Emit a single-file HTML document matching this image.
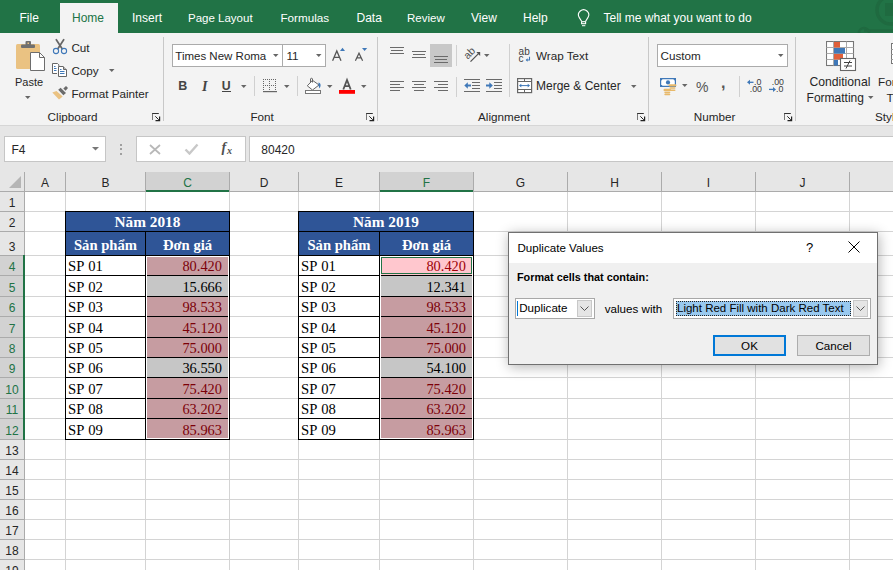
<!DOCTYPE html><html><head><meta charset="utf-8"><style>html,body{margin:0;padding:0}body{width:893px;height:570px;overflow:hidden;position:relative;background:#fff;font-family:"Liberation Sans",sans-serif}</style></head><body>
<div style="position:absolute;left:0px;top:0px;width:893px;height:33px;background:#217346;"></div>
<svg style="position:absolute;left:850px;top:0px;" width="43" height="33" viewBox="0 0 43 33"><circle cx="41" cy="10" r="14" fill="none" stroke="#1f6a40" stroke-width="3.5"/><rect x="35" y="3" width="8" height="13" fill="#1f6a40"/><path d="M14 30.5 H43" stroke="#1f6a40" stroke-width="2.5"/><path d="M9 33 A5 5 0 0 1 19 33" fill="none" stroke="#1f6a40" stroke-width="2.5"/></svg>
<div style="position:absolute;left:60px;top:3px;width:58px;height:30px;background:#f3f3f3;"></div>
<div style="position:absolute;left:19.5px;top:12.14px;font-family:'Liberation Sans', sans-serif;font-size:12px;line-height:1;color:#fff;font-weight:400;white-space:nowrap;">File</div>
<div style="position:absolute;left:72px;top:12.14px;font-family:'Liberation Sans', sans-serif;font-size:12px;line-height:1;color:#217346;font-weight:400;white-space:nowrap;">Home</div>
<div style="position:absolute;left:132px;top:12.14px;font-family:'Liberation Sans', sans-serif;font-size:12px;line-height:1;color:#fff;font-weight:400;white-space:nowrap;">Insert</div>
<div style="position:absolute;left:188px;top:12.57px;font-family:'Liberation Sans', sans-serif;font-size:11.5px;line-height:1;color:#fff;font-weight:400;white-space:nowrap;">Page Layout</div>
<div style="position:absolute;left:280.4px;top:12.40px;font-family:'Liberation Sans', sans-serif;font-size:11.7px;line-height:1;color:#fff;font-weight:400;white-space:nowrap;">Formulas</div>
<div style="position:absolute;left:356.5px;top:12.14px;font-family:'Liberation Sans', sans-serif;font-size:12px;line-height:1;color:#fff;font-weight:400;white-space:nowrap;">Data</div>
<div style="position:absolute;left:407px;top:12.57px;font-family:'Liberation Sans', sans-serif;font-size:11.5px;line-height:1;color:#fff;font-weight:400;white-space:nowrap;">Review</div>
<div style="position:absolute;left:471px;top:12.14px;font-family:'Liberation Sans', sans-serif;font-size:12px;line-height:1;color:#fff;font-weight:400;white-space:nowrap;">View</div>
<div style="position:absolute;left:523px;top:12.14px;font-family:'Liberation Sans', sans-serif;font-size:12px;line-height:1;color:#fff;font-weight:400;white-space:nowrap;">Help</div>
<svg style="position:absolute;left:572px;top:6px;" width="24" height="24" viewBox="0 0 24 24"><path d="M9.6 15.2 L7.3 11.6 A5.1 5.1 0 1 1 15.9 11.6 L13.6 15.2" fill="none" stroke="#fff" stroke-width="1.1"/><rect x="9.6" y="15.7" width="4" height="2" fill="none" stroke="#fff" stroke-width="1.1"/><rect x="10" y="19.2" width="3.3" height="1" fill="#fff"/></svg>
<div style="position:absolute;left:603.5px;top:12.14px;font-family:'Liberation Sans', sans-serif;font-size:12px;line-height:1;color:#fff;font-weight:400;white-space:nowrap;">Tell me what you want to do</div>
<div style="position:absolute;left:0px;top:33px;width:893px;height:92px;background:#f3f3f3;"></div>
<div style="position:absolute;left:0px;top:125px;width:893px;height:1px;background:#d6d6d6;"></div>
<div style="position:absolute;left:163px;top:37px;width:1px;height:84px;background:#c8c8c8;"></div>
<div style="position:absolute;left:377px;top:37px;width:1px;height:84px;background:#c8c8c8;"></div>
<div style="position:absolute;left:648px;top:37px;width:1px;height:84px;background:#c8c8c8;"></div>
<div style="position:absolute;left:795px;top:37px;width:1px;height:84px;background:#c8c8c8;"></div>
<div style="position:absolute;left:47.6px;top:111.40px;font-family:'Liberation Sans', sans-serif;font-size:11.7px;line-height:1;color:#262626;font-weight:400;white-space:nowrap;">Clipboard</div>
<div style="position:absolute;left:250.4px;top:111.40px;font-family:'Liberation Sans', sans-serif;font-size:11.7px;line-height:1;color:#262626;font-weight:400;white-space:nowrap;">Font</div>
<div style="position:absolute;left:478px;top:111.40px;font-family:'Liberation Sans', sans-serif;font-size:11.7px;line-height:1;color:#262626;font-weight:400;white-space:nowrap;">Alignment</div>
<div style="position:absolute;left:693.8px;top:111.40px;font-family:'Liberation Sans', sans-serif;font-size:11.7px;line-height:1;color:#262626;font-weight:400;white-space:nowrap;">Number</div>
<div style="position:absolute;left:875px;top:111.40px;font-family:'Liberation Sans', sans-serif;font-size:11.7px;line-height:1;color:#262626;font-weight:400;white-space:nowrap;">Styles</div>
<svg style="position:absolute;left:151px;top:112px;" width="11" height="11" viewBox="0 0 11 11"><path d="M1.5 1.2 V8" stroke="#777" stroke-width="1"/><path d="M1.2 1.5 H7.8" stroke="#333" stroke-width="1"/><path d="M4.3 4.3 L7.8 7.8" stroke="#222" stroke-width="1"/><path d="M4.5 8.6 H8.6 V4.5" fill="none" stroke="#222" stroke-width="1.2"/></svg>
<svg style="position:absolute;left:365px;top:112px;" width="11" height="11" viewBox="0 0 11 11"><path d="M1.5 1.2 V8" stroke="#777" stroke-width="1"/><path d="M1.2 1.5 H7.8" stroke="#333" stroke-width="1"/><path d="M4.3 4.3 L7.8 7.8" stroke="#222" stroke-width="1"/><path d="M4.5 8.6 H8.6 V4.5" fill="none" stroke="#222" stroke-width="1.2"/></svg>
<svg style="position:absolute;left:636px;top:112px;" width="11" height="11" viewBox="0 0 11 11"><path d="M1.5 1.2 V8" stroke="#777" stroke-width="1"/><path d="M1.2 1.5 H7.8" stroke="#333" stroke-width="1"/><path d="M4.3 4.3 L7.8 7.8" stroke="#222" stroke-width="1"/><path d="M4.5 8.6 H8.6 V4.5" fill="none" stroke="#222" stroke-width="1.2"/></svg>
<svg style="position:absolute;left:782.8px;top:112px;" width="11" height="11" viewBox="0 0 11 11"><path d="M1.5 1.2 V8" stroke="#777" stroke-width="1"/><path d="M1.2 1.5 H7.8" stroke="#333" stroke-width="1"/><path d="M4.3 4.3 L7.8 7.8" stroke="#222" stroke-width="1"/><path d="M4.5 8.6 H8.6 V4.5" fill="none" stroke="#222" stroke-width="1.2"/></svg>
<svg style="position:absolute;left:14px;top:40px;" width="32" height="32" viewBox="0 0 32 32"><rect x="2" y="4" width="24" height="25" rx="1.5" fill="#eac282"/><rect x="7" y="4.5" width="14" height="3.5" rx="1" fill="#707070"/><rect x="11.5" y="1" width="5.5" height="4.5" rx="1" fill="#707070"/><rect x="13.5" y="2.5" width="1.5" height="1.5" fill="#eac282"/><path d="M16.5 12.5 H25.5 L30.5 17.5 V30.5 H16.5 Z" fill="#fff" stroke="#6d6d6d" stroke-width="1"/><path d="M25.5 12.5 V17.5 H30.5" fill="none" stroke="#6d6d6d" stroke-width="1"/></svg>
<div style="position:absolute;left:14.5px;top:76.40px;font-family:'Liberation Sans', sans-serif;font-size:11.7px;line-height:1;color:#262626;font-weight:400;white-space:nowrap;transform:scaleX(0.94);transform-origin:0 0;">Paste</div>
<svg style="position:absolute;left:23.85px;top:95.3px" width="7.5" height="5" viewBox="0 0 7.5 5"><path d="M1 1 H6.5 L3.75 4 Z" fill="#666"/></svg>
<svg style="position:absolute;left:52px;top:38px;" width="17" height="17" viewBox="0 0 17 17"><path d="M4.3 1.7 L10 10.5 M11.7 1.7 L6 10.5" stroke="#666" stroke-width="1.7" stroke-linecap="round"/><circle cx="4" cy="13" r="2.6" fill="none" stroke="#3f78b8" stroke-width="1.1"/><circle cx="12" cy="13" r="2.6" fill="none" stroke="#3f78b8" stroke-width="1.1"/></svg>
<div style="position:absolute;left:71.4px;top:42.40px;font-family:'Liberation Sans', sans-serif;font-size:11.7px;line-height:1;color:#262626;font-weight:400;white-space:nowrap;">Cut</div>
<svg style="position:absolute;left:50px;top:60px;" width="18" height="18" viewBox="0 0 18 18"><path d="M7 13.5 H2.5 V3.5 H7.5 L8.8 4.8 V6.5" fill="#fff" stroke="#666" stroke-width="1"/><path d="M8.5 6.5 H13 L16.5 10 V16.5 H8.5 Z" fill="#fff" stroke="#666" stroke-width="1"/><path d="M13.5 6.5 V9.5 H16.5" fill="none" stroke="#666" stroke-width="1"/><path d="M4 6.5 H5.5 M4 8.5 H6.5 M4 10.5 H6.5 M10 9.5 H11.5 M10 11.5 H14.5 M10 13.5 H14.5" stroke="#3f78b8" stroke-width="1"/></svg>
<div style="position:absolute;left:71.4px;top:64.80px;font-family:'Liberation Sans', sans-serif;font-size:11.7px;line-height:1;color:#262626;font-weight:400;white-space:nowrap;">Copy</div>
<svg style="position:absolute;left:107.65px;top:68.3px" width="7.5" height="5" viewBox="0 0 7.5 5"><path d="M1 1 H6.5 L3.75 4 Z" fill="#666"/></svg>
<svg style="position:absolute;left:50px;top:83px;" width="20" height="20" viewBox="0 0 20 20"><path d="M2.3 9.4 L6.5 8 L12.7 13.5 L9 16.5 Z" fill="#eac282"/><path d="M8.2 6.8 L10.6 4.7 L16 10 L13.4 12.2 Z" fill="#6b6b6b"/><path d="M13.3 5.6 L16 3 L18 5 L15.6 7.8 Z" fill="#6b6b6b"/></svg>
<div style="position:absolute;left:71.4px;top:87.80px;font-family:'Liberation Sans', sans-serif;font-size:11.7px;line-height:1;color:#262626;font-weight:400;white-space:nowrap;">Format Painter</div>
<div style="position:absolute;left:172px;top:44px;width:109px;height:21px;background:#fff;border:1px solid #ababab"></div>
<div style="position:absolute;left:282px;top:44px;width:43px;height:21px;background:#fff;border:1px solid #ababab;border-left:none"></div>
<div style="position:absolute;left:282px;top:44px;width:1px;height:23px;background:#ababab;"></div>
<div style="position:absolute;left:175.3px;top:50.57px;font-family:'Liberation Sans', sans-serif;font-size:11.5px;line-height:1;color:#262626;font-weight:400;white-space:nowrap;">Times New Roma</div>
<svg style="position:absolute;left:271.75px;top:53px" width="7.5" height="5" viewBox="0 0 7.5 5"><path d="M1 1 H6.5 L3.75 4 Z" fill="#666"/></svg>
<div style="position:absolute;left:286.4px;top:50.40px;font-family:'Liberation Sans', sans-serif;font-size:11.7px;line-height:1;color:#262626;font-weight:400;white-space:nowrap;">11</div>
<svg style="position:absolute;left:314.75px;top:53px" width="7.5" height="5" viewBox="0 0 7.5 5"><path d="M1 1 H6.5 L3.75 4 Z" fill="#666"/></svg>
<svg style="position:absolute;left:331px;top:45px;" width="16" height="17" viewBox="0 0 16 17"><path d="M1.6 15.8 L5.8 6 L10 15.8 M3.3 12.3 H8.3" fill="none" stroke="#555" stroke-width="1.3"/><path d="M9 6 L11.5 2.8 L14 6 Z" fill="#3f78b8"/></svg>
<svg style="position:absolute;left:354px;top:45px;" width="16" height="17" viewBox="0 0 16 17"><path d="M1.4 15.8 L5 8.2 L8.6 15.8 M2.8 12.8 H7.2" fill="none" stroke="#555" stroke-width="1.2"/><path d="M8 3 H13.2 L10.6 6 Z" fill="#3f78b8"/></svg>
<div style="position:absolute;left:178.3px;top:79.72px;font-family:'Liberation Sans', sans-serif;font-size:12.5px;line-height:1;color:#444;font-weight:700;white-space:nowrap;">B</div>
<div style="position:absolute;left:202px;top:79.11px;font-family:'Liberation Serif', serif;font-size:14.2px;line-height:1;color:#444;font-weight:700;white-space:nowrap;"><i>I</i></div>
<div style="position:absolute;left:221.8px;top:79.69px;font-family:'Liberation Sans', sans-serif;font-size:12.3px;line-height:1;color:#444;font-weight:700;white-space:nowrap;">U</div>
<div style="position:absolute;left:222px;top:91px;width:9px;height:1px;background:#444;"></div>
<svg style="position:absolute;left:239.65px;top:84.2px" width="7.5" height="5" viewBox="0 0 7.5 5"><path d="M1 1 H6.5 L3.75 4 Z" fill="#666"/></svg>
<div style="position:absolute;left:254px;top:76px;width:1px;height:20px;background:#d0d0d0;"></div>
<svg style="position:absolute;left:263px;top:79px;" width="15" height="14" viewBox="0 0 15 14"><rect x="0" y="0" width="1" height="1" fill="#666"/><rect x="0" y="2" width="1" height="1" fill="#666"/><rect x="0" y="4" width="1" height="1" fill="#666"/><rect x="0" y="6" width="1" height="1" fill="#666"/><rect x="0" y="8" width="1" height="1" fill="#666"/><rect x="0" y="10" width="1" height="1" fill="#666"/><rect x="2" y="0" width="1" height="1" fill="#666"/><rect x="2" y="6" width="1" height="1" fill="#666"/><rect x="4" y="0" width="1" height="1" fill="#666"/><rect x="4" y="6" width="1" height="1" fill="#666"/><rect x="6" y="0" width="1" height="1" fill="#666"/><rect x="6" y="2" width="1" height="1" fill="#666"/><rect x="6" y="4" width="1" height="1" fill="#666"/><rect x="6" y="6" width="1" height="1" fill="#666"/><rect x="6" y="8" width="1" height="1" fill="#666"/><rect x="6" y="10" width="1" height="1" fill="#666"/><rect x="8" y="0" width="1" height="1" fill="#666"/><rect x="8" y="6" width="1" height="1" fill="#666"/><rect x="10" y="0" width="1" height="1" fill="#666"/><rect x="10" y="6" width="1" height="1" fill="#666"/><rect x="12" y="0" width="1" height="1" fill="#666"/><rect x="12" y="2" width="1" height="1" fill="#666"/><rect x="12" y="4" width="1" height="1" fill="#666"/><rect x="12" y="6" width="1" height="1" fill="#666"/><rect x="12" y="8" width="1" height="1" fill="#666"/><rect x="12" y="10" width="1" height="1" fill="#666"/><rect x="0" y="12" width="14" height="1.2" fill="#666"/></svg>
<svg style="position:absolute;left:282.75px;top:84.2px" width="7.5" height="5" viewBox="0 0 7.5 5"><path d="M1 1 H6.5 L3.75 4 Z" fill="#666"/></svg>
<div style="position:absolute;left:297px;top:76px;width:1px;height:20px;background:#d0d0d0;"></div>
<svg style="position:absolute;left:304px;top:77px;" width="19" height="18" viewBox="0 0 19 18"><path d="M3.3 8.8 L8.5 3.3 L15 8 L8.5 13 Z" fill="#fff" stroke="#666" stroke-width="1"/><path d="M6.5 5.5 V2 C6.5 1 8.5 1 8.5 2 V5.5" fill="none" stroke="#666" stroke-width="1"/><path d="M14.5 5.5 C16.5 6 17.5 8 15.5 11.5 L14.5 8.5 Z" fill="#3f78b8"/><rect x="1.5" y="13.5" width="15" height="3" fill="#fff" stroke="#777" stroke-width="1"/></svg>
<svg style="position:absolute;left:325.75px;top:84.2px" width="7.5" height="5" viewBox="0 0 7.5 5"><path d="M1 1 H6.5 L3.75 4 Z" fill="#666"/></svg>
<svg style="position:absolute;left:339px;top:77px;" width="16" height="17" viewBox="0 0 16 17"><path d="M4.3 12.5 L8 3 L11.7 12.5 M5.6 9.2 H10.4" fill="none" stroke="#555" stroke-width="1.8"/><rect x="0" y="13" width="16" height="3.8" fill="#ff0000"/></svg>
<svg style="position:absolute;left:359.75px;top:84.2px" width="7.5" height="5" viewBox="0 0 7.5 5"><path d="M1 1 H6.5 L3.75 4 Z" fill="#666"/></svg>
<svg style="position:absolute;left:390px;top:47px;" width="14" height="10" viewBox="0 0 14 10"><path d="M0.0 0.5 H14.0" stroke="#6a6a6a" stroke-width="1"/><path d="M1.0 3.5 H13.0" stroke="#6a6a6a" stroke-width="1"/><path d="M0.0 6.5 H14.0" stroke="#6a6a6a" stroke-width="1"/></svg>
<svg style="position:absolute;left:412px;top:51px;" width="14" height="10" viewBox="0 0 14 10"><path d="M0.0 0.5 H14.0" stroke="#6a6a6a" stroke-width="1"/><path d="M1.0 3.5 H13.0" stroke="#6a6a6a" stroke-width="1"/><path d="M0.0 6.5 H14.0" stroke="#6a6a6a" stroke-width="1"/></svg>
<div style="position:absolute;left:430px;top:44px;width:22px;height:23px;background:#c8c8c8;"></div>
<svg style="position:absolute;left:434px;top:56px;" width="14" height="10" viewBox="0 0 14 10"><path d="M0.0 0.5 H14.0" stroke="#6a6a6a" stroke-width="1"/><path d="M1.0 3.5 H13.0" stroke="#6a6a6a" stroke-width="1"/><path d="M0.0 6.5 H14.0" stroke="#6a6a6a" stroke-width="1"/></svg>
<div style="position:absolute;left:456px;top:45px;width:1px;height:21px;background:#d0d0d0;"></div>
<svg style="position:absolute;left:460px;top:44px;" width="24" height="22" viewBox="0 0 24 22"><text x="9.8" y="9.6" text-anchor="middle" dominant-baseline="middle" font-family="Liberation Sans" font-size="10.5" fill="#505050" transform="rotate(-45 9.8 9.6)">ab</text><path d="M10.5 17.6 L18.5 9.6" stroke="#505050" stroke-width="1.3"/><path d="M16.3 8 H20.2 V11.9 Z" fill="#505050"/></svg>
<svg style="position:absolute;left:482.75px;top:53px" width="7.5" height="5" viewBox="0 0 7.5 5"><path d="M1 1 H6.5 L3.75 4 Z" fill="#666"/></svg>
<svg style="position:absolute;left:390px;top:81px;" width="14" height="13" viewBox="0 0 14 13"><path d="M0 0.5 H14" stroke="#6a6a6a" stroke-width="1"/><path d="M0 3.5 H10" stroke="#6a6a6a" stroke-width="1"/><path d="M0 6.5 H14" stroke="#6a6a6a" stroke-width="1"/><path d="M0 9.5 H10" stroke="#6a6a6a" stroke-width="1"/></svg>
<svg style="position:absolute;left:412px;top:81px;" width="14" height="13" viewBox="0 0 14 13"><path d="M0.0 0.5 H14.0" stroke="#6a6a6a" stroke-width="1"/><path d="M2.0 3.5 H12.0" stroke="#6a6a6a" stroke-width="1"/><path d="M0.0 6.5 H14.0" stroke="#6a6a6a" stroke-width="1"/><path d="M2.0 9.5 H12.0" stroke="#6a6a6a" stroke-width="1"/></svg>
<svg style="position:absolute;left:434px;top:81px;" width="14" height="13" viewBox="0 0 14 13"><path d="M0 0.5 H14" stroke="#6a6a6a" stroke-width="1"/><path d="M4 3.5 H14" stroke="#6a6a6a" stroke-width="1"/><path d="M0 6.5 H14" stroke="#6a6a6a" stroke-width="1"/><path d="M4 9.5 H14" stroke="#6a6a6a" stroke-width="1"/></svg>
<div style="position:absolute;left:456px;top:77px;width:1px;height:20px;background:#d0d0d0;"></div>
<svg style="position:absolute;left:464px;top:79px;" width="17" height="14" viewBox="0 0 17 14"><path d="M0 0.5 H16 M8 3.5 H16 M8 6.5 H16 M8 9.5 H16 M0 12.5 H16" stroke="#6a6a6a" stroke-width="1"/><path d="M7 6.5 H3" stroke="#3f78b8" stroke-width="2"/><path d="M0.3 6.5 L3.8 3.3 V9.7 Z" fill="#3f78b8"/></svg>
<svg style="position:absolute;left:486px;top:79px;" width="17" height="14" viewBox="0 0 17 14"><path d="M0 0.5 H16 M8 3.5 H16 M8 6.5 H16 M8 9.5 H16 M0 12.5 H16" stroke="#6a6a6a" stroke-width="1"/><path d="M0 6.5 H4" stroke="#3f78b8" stroke-width="2"/><path d="M6.8 6.5 L3.3 3.3 V9.7 Z" fill="#3f78b8"/></svg>
<div style="position:absolute;left:509px;top:44px;width:1px;height:53px;background:#d0d0d0;"></div>
<svg style="position:absolute;left:514px;top:44px;" width="22" height="22" viewBox="0 0 22 22"><text x="4.6" y="10.7" font-family="Liberation Sans" font-size="10" fill="#404040">ab</text><text x="4.6" y="18" font-family="Liberation Sans" font-size="10" fill="#404040">c</text><path d="M15.5 12.8 V16 H12.6" fill="none" stroke="#3f78b8" stroke-width="1.1"/><path d="M11.6 16 L13.6 14.2 V17.8 Z" fill="#3f78b8"/></svg>
<div style="position:absolute;left:536px;top:50.00px;font-family:'Liberation Sans', sans-serif;font-size:11.7px;line-height:1;color:#262626;font-weight:400;white-space:nowrap;">Wrap Text</div>
<svg style="position:absolute;left:516px;top:78px;" width="17" height="16" viewBox="0 0 17 16"><rect x="1.6" y="0.6" width="14" height="14" fill="#fff" stroke="#666" stroke-width="1.2"/><path d="M1 3.5 H16 M1 11.5 H16 M8.5 0.5 V3.5 M8.5 11.5 V15" stroke="#666" stroke-width="1"/><path d="M4.5 7.6 H12.5" stroke="#3f78b8" stroke-width="1"/><path d="M3 7.6 L5.3 5.8 V9.4 Z M14 7.6 L11.7 5.8 V9.4 Z" fill="#3f78b8"/></svg>
<div style="position:absolute;left:536px;top:80.34px;font-family:'Liberation Sans', sans-serif;font-size:12px;line-height:1;color:#262626;font-weight:400;white-space:nowrap;">Merge &amp; Center</div>
<svg style="position:absolute;left:629.55px;top:84px" width="7.5" height="5" viewBox="0 0 7.5 5"><path d="M1 1 H6.5 L3.75 4 Z" fill="#666"/></svg>
<div style="position:absolute;left:657px;top:44px;width:129px;height:21px;background:#fff;border:1px solid #ababab"></div>
<div style="position:absolute;left:660.5px;top:50.40px;font-family:'Liberation Sans', sans-serif;font-size:11.7px;line-height:1;color:#262626;font-weight:400;white-space:nowrap;">Custom</div>
<svg style="position:absolute;left:776.75px;top:53px" width="7.5" height="5" viewBox="0 0 7.5 5"><path d="M1 1 H6.5 L3.75 4 Z" fill="#666"/></svg>
<svg style="position:absolute;left:656px;top:74px;" width="24" height="22" viewBox="0 0 24 22"><rect x="4" y="4" width="16" height="9" fill="#3f78b8"/><path d="M6.5 5.2 H17.3 L18.8 6.7 V10.3 L17.3 11.8 H6.5 L5.2 10.3 V6.7 Z" fill="#fff"/><circle cx="12" cy="8.4" r="2.1" fill="#3f78b8"/><rect x="12.5" y="10.2" width="8" height="2.2" rx="1.1" fill="#e8b96a"/><rect x="13.5" y="13.2" width="6" height="1.6" rx="0.8" fill="#e8b96a"/><rect x="13.5" y="15.5" width="6" height="1.6" rx="0.8" fill="#e8b96a"/><rect x="7.5" y="14.8" width="7.5" height="2.4" rx="1.2" fill="#e8b96a"/><rect x="8.3" y="17.8" width="6" height="1.6" rx="0.8" fill="#e8b96a"/><rect x="8.3" y="19.8" width="6" height="1.5" rx="0.75" fill="#e8b96a"/></svg>
<svg style="position:absolute;left:680.75px;top:83px" width="7.5" height="5" viewBox="0 0 7.5 5"><path d="M1 1 H6.5 L3.75 4 Z" fill="#666"/></svg>
<div style="position:absolute;left:696px;top:80.45px;font-family:'Liberation Sans', sans-serif;font-size:14px;line-height:1;color:#555;font-weight:400;white-space:nowrap;">%</div>
<div style="position:absolute;left:721px;top:74.76px;font-family:'Liberation Sans', sans-serif;font-size:16px;line-height:1;color:#555;font-weight:700;white-space:nowrap;">,</div>
<div style="position:absolute;left:739px;top:76px;width:1px;height:21px;background:#d0d0d0;"></div>
<svg style="position:absolute;left:746px;top:78px;" width="18" height="16" viewBox="0 0 18 16"><path d="M7.5 4.3 H2.5" stroke="#3f78b8" stroke-width="1.3"/><path d="M1 4.3 L4 1.8 V6.8 Z" fill="#3f78b8"/><text x="8" y="6.9" font-family="Liberation Sans" font-size="8.8" fill="#3a3a3a">.0</text><text x="3.7" y="13.9" font-family="Liberation Sans" font-size="8.8" fill="#3a3a3a">.00</text></svg>
<svg style="position:absolute;left:768px;top:78px;" width="18" height="16" viewBox="0 0 18 16"><text x="3.7" y="6.9" font-family="Liberation Sans" font-size="8.8" fill="#3a3a3a">.00</text><path d="M1 11.4 H6" stroke="#3f78b8" stroke-width="1.3"/><path d="M8 11.4 L5 8.9 V13.9 Z" fill="#3f78b8"/><text x="8" y="13.9" font-family="Liberation Sans" font-size="8.8" fill="#3a3a3a">.0</text></svg>
<svg style="position:absolute;left:826px;top:41px;" width="31" height="31" viewBox="0 0 31 31"><rect x="0.5" y="0.5" width="27" height="24" fill="#fff" stroke="#777" stroke-width="1.1"/><path d="M0.5 6.5 H27.5 M0.5 12.5 H27.5 M0.5 18.5 H27.5 M7.5 0.5 V24.5 M20.5 0.5 V24.5" stroke="#aaa" stroke-width="1"/><rect x="8" y="1" width="6" height="5.5" fill="#e0603a"/><rect x="8" y="7" width="11" height="5.5" fill="#3f78b8"/><rect x="8" y="13" width="9" height="5.5" fill="#e0603a"/><rect x="8" y="19" width="4" height="5.5" fill="#3f78b8"/><rect x="14.5" y="17.5" width="15" height="12" fill="#fff" stroke="#666" stroke-width="1.1"/><path d="M18 21.5 H26 M18 25 H26 M24 19.5 L20 27.5" stroke="#444" stroke-width="1"/></svg>
<div style="position:absolute;left:809.4px;top:76.27px;font-family:'Liberation Sans', sans-serif;font-size:12.2px;line-height:1;color:#262626;font-weight:400;white-space:nowrap;">Conditional</div>
<div style="position:absolute;left:806.6px;top:92.14px;font-family:'Liberation Sans', sans-serif;font-size:12px;line-height:1;color:#262626;font-weight:400;white-space:nowrap;">Formatting</div>
<svg style="position:absolute;left:866.75px;top:95.2px" width="7.5" height="5" viewBox="0 0 7.5 5"><path d="M1 1 H6.5 L3.75 4 Z" fill="#666"/></svg>
<div style="position:absolute;left:878px;top:76.40px;font-family:'Liberation Sans', sans-serif;font-size:11.7px;line-height:1;color:#262626;font-weight:400;white-space:nowrap;">For</div>
<div style="position:absolute;left:886.5px;top:91.90px;font-family:'Liberation Sans', sans-serif;font-size:11.7px;line-height:1;color:#262626;font-weight:400;white-space:nowrap;">T</div>
<svg style="position:absolute;left:891px;top:43px;" width="6" height="30" viewBox="0 0 6 30"><rect x="0.5" y="0.5" width="10" height="20" fill="#fff" stroke="#777"/><path d="M0 6.5 H6 M0 11.5 H6 M0 16.5 H6" stroke="#999"/></svg>
<div style="position:absolute;left:0px;top:126px;width:893px;height:46px;background:#e6e6e6;"></div>
<div style="position:absolute;left:4px;top:136px;width:100px;height:24px;background:#fff;border:1px solid #c6c6c6"></div>
<div style="position:absolute;left:11.5px;top:144.14px;font-family:'Liberation Sans', sans-serif;font-size:12px;line-height:1;color:#262626;font-weight:400;white-space:nowrap;">F4</div>
<svg style="position:absolute;left:91.0px;top:145.5px" width="9" height="5.5" viewBox="0 0 9 5.5"><path d="M1 1 H8 L4.5 4.5 Z" fill="#777"/></svg>
<div style="position:absolute;left:120px;top:143.5px;width:2px;height:2px;background:#a0a0a0;"></div>
<div style="position:absolute;left:120px;top:148px;width:2px;height:2px;background:#a0a0a0;"></div>
<div style="position:absolute;left:120px;top:152.5px;width:2px;height:2px;background:#a0a0a0;"></div>
<div style="position:absolute;left:136px;top:136px;width:108px;height:24px;background:#fff;border:1px solid #c6c6c6"></div>
<svg style="position:absolute;left:149px;top:144px;" width="12" height="11" viewBox="0 0 12 11"><path d="M1 1 L11 10 M11 1 L1 10" stroke="#b8b8b8" stroke-width="1.7"/></svg>
<svg style="position:absolute;left:184px;top:143px;" width="15" height="12" viewBox="0 0 15 12"><path d="M1.5 6.5 L5.5 10.5 L13.5 1.5" fill="none" stroke="#c8c8c8" stroke-width="2.4"/></svg>
<div style="position:absolute;left:221.5px;top:140.97px;font-family:'Liberation Serif', serif;font-size:14px;line-height:1;color:#505050;font-weight:700;white-space:nowrap;"><i>f</i></div>
<div style="position:absolute;left:227px;top:145.82px;font-family:'Liberation Serif', serif;font-size:10px;line-height:1;color:#505050;font-weight:700;white-space:nowrap;"><i>x</i></div>
<div style="position:absolute;left:249px;top:136px;width:650px;height:24px;background:#fff;border:1px solid #c6c6c6"></div>
<div style="position:absolute;left:261.3px;top:144.14px;font-family:'Liberation Sans', sans-serif;font-size:12px;line-height:1;color:#262626;font-weight:400;white-space:nowrap;">80420</div>
<div style="position:absolute;left:0px;top:172px;width:893px;height:20px;background:#e6e6e6;"></div>
<div style="position:absolute;left:0px;top:192px;width:24px;height:378px;background:#e6e6e6;"></div>
<div style="position:absolute;left:25px;top:192px;width:868px;height:378px;background:#fff;"></div>
<div style="position:absolute;left:146px;top:172px;width:83px;height:19px;background:#d2d2d2;"></div>
<div style="position:absolute;left:380px;top:172px;width:93px;height:19px;background:#d2d2d2;"></div>
<div style="position:absolute;left:0px;top:256px;width:23px;height:184px;background:#d2d2d2;"></div>
<svg style="position:absolute;left:8px;top:175px;" width="14" height="14" viewBox="0 0 14 14"><path d="M13 1 V13 H1 Z" fill="#b5b5b5"/></svg>
<div style="position:absolute;left:24px;top:172px;width:1px;height:19px;background:#ababab;"></div>
<div style="position:absolute;left:65px;top:172px;width:1px;height:19px;background:#ababab;"></div>
<div style="position:absolute;left:145px;top:172px;width:1px;height:19px;background:#ababab;"></div>
<div style="position:absolute;left:229px;top:172px;width:1px;height:19px;background:#ababab;"></div>
<div style="position:absolute;left:298px;top:172px;width:1px;height:19px;background:#ababab;"></div>
<div style="position:absolute;left:379px;top:172px;width:1px;height:19px;background:#ababab;"></div>
<div style="position:absolute;left:473px;top:172px;width:1px;height:19px;background:#ababab;"></div>
<div style="position:absolute;left:567px;top:172px;width:1px;height:19px;background:#ababab;"></div>
<div style="position:absolute;left:661px;top:172px;width:1px;height:19px;background:#ababab;"></div>
<div style="position:absolute;left:755px;top:172px;width:1px;height:19px;background:#ababab;"></div>
<div style="position:absolute;left:849px;top:172px;width:1px;height:19px;background:#ababab;"></div>
<div style="position:absolute;left:0px;top:191px;width:893px;height:1px;background:#ababab;"></div>
<div style="position:absolute;left:15.0px;width:60px;text-align:center;top:177.14px;font-family:'Liberation Sans', sans-serif;font-size:12px;line-height:1;color:#262626;font-weight:400;white-space:nowrap;">A</div>
<div style="position:absolute;left:75.5px;width:60px;text-align:center;top:177.14px;font-family:'Liberation Sans', sans-serif;font-size:12px;line-height:1;color:#262626;font-weight:400;white-space:nowrap;">B</div>
<div style="position:absolute;left:157.5px;width:60px;text-align:center;top:177.14px;font-family:'Liberation Sans', sans-serif;font-size:12px;line-height:1;color:#217346;font-weight:400;white-space:nowrap;">C</div>
<div style="position:absolute;left:234.0px;width:60px;text-align:center;top:177.14px;font-family:'Liberation Sans', sans-serif;font-size:12px;line-height:1;color:#262626;font-weight:400;white-space:nowrap;">D</div>
<div style="position:absolute;left:309.0px;width:60px;text-align:center;top:177.14px;font-family:'Liberation Sans', sans-serif;font-size:12px;line-height:1;color:#262626;font-weight:400;white-space:nowrap;">E</div>
<div style="position:absolute;left:396.5px;width:60px;text-align:center;top:177.14px;font-family:'Liberation Sans', sans-serif;font-size:12px;line-height:1;color:#217346;font-weight:400;white-space:nowrap;">F</div>
<div style="position:absolute;left:490.5px;width:60px;text-align:center;top:177.14px;font-family:'Liberation Sans', sans-serif;font-size:12px;line-height:1;color:#262626;font-weight:400;white-space:nowrap;">G</div>
<div style="position:absolute;left:584.5px;width:60px;text-align:center;top:177.14px;font-family:'Liberation Sans', sans-serif;font-size:12px;line-height:1;color:#262626;font-weight:400;white-space:nowrap;">H</div>
<div style="position:absolute;left:678.5px;width:60px;text-align:center;top:177.14px;font-family:'Liberation Sans', sans-serif;font-size:12px;line-height:1;color:#262626;font-weight:400;white-space:nowrap;">I</div>
<div style="position:absolute;left:772.5px;width:60px;text-align:center;top:177.14px;font-family:'Liberation Sans', sans-serif;font-size:12px;line-height:1;color:#262626;font-weight:400;white-space:nowrap;">J</div>
<div style="position:absolute;left:146px;top:190px;width:83px;height:2px;background:#217346;"></div>
<div style="position:absolute;left:380px;top:190px;width:93px;height:2px;background:#217346;"></div>
<div style="position:absolute;left:65px;top:192px;width:1px;height:378px;background:#d4d4d4;"></div>
<div style="position:absolute;left:145px;top:192px;width:1px;height:378px;background:#d4d4d4;"></div>
<div style="position:absolute;left:229px;top:192px;width:1px;height:378px;background:#d4d4d4;"></div>
<div style="position:absolute;left:298px;top:192px;width:1px;height:378px;background:#d4d4d4;"></div>
<div style="position:absolute;left:379px;top:192px;width:1px;height:378px;background:#d4d4d4;"></div>
<div style="position:absolute;left:473px;top:192px;width:1px;height:378px;background:#d4d4d4;"></div>
<div style="position:absolute;left:567px;top:192px;width:1px;height:378px;background:#d4d4d4;"></div>
<div style="position:absolute;left:661px;top:192px;width:1px;height:378px;background:#d4d4d4;"></div>
<div style="position:absolute;left:755px;top:192px;width:1px;height:378px;background:#d4d4d4;"></div>
<div style="position:absolute;left:849px;top:192px;width:1px;height:378px;background:#d4d4d4;"></div>
<div style="position:absolute;left:25px;top:211px;width:868px;height:1px;background:#d4d4d4;"></div>
<div style="position:absolute;left:25px;top:231px;width:868px;height:1px;background:#d4d4d4;"></div>
<div style="position:absolute;left:25px;top:255px;width:868px;height:1px;background:#d4d4d4;"></div>
<div style="position:absolute;left:25px;top:275px;width:868px;height:1px;background:#d4d4d4;"></div>
<div style="position:absolute;left:25px;top:296px;width:868px;height:1px;background:#d4d4d4;"></div>
<div style="position:absolute;left:25px;top:316px;width:868px;height:1px;background:#d4d4d4;"></div>
<div style="position:absolute;left:25px;top:337px;width:868px;height:1px;background:#d4d4d4;"></div>
<div style="position:absolute;left:25px;top:357px;width:868px;height:1px;background:#d4d4d4;"></div>
<div style="position:absolute;left:25px;top:377px;width:868px;height:1px;background:#d4d4d4;"></div>
<div style="position:absolute;left:25px;top:398px;width:868px;height:1px;background:#d4d4d4;"></div>
<div style="position:absolute;left:25px;top:418px;width:868px;height:1px;background:#d4d4d4;"></div>
<div style="position:absolute;left:25px;top:439px;width:868px;height:1px;background:#d4d4d4;"></div>
<div style="position:absolute;left:25px;top:459px;width:868px;height:1px;background:#d4d4d4;"></div>
<div style="position:absolute;left:25px;top:479px;width:868px;height:1px;background:#d4d4d4;"></div>
<div style="position:absolute;left:25px;top:499px;width:868px;height:1px;background:#d4d4d4;"></div>
<div style="position:absolute;left:25px;top:519px;width:868px;height:1px;background:#d4d4d4;"></div>
<div style="position:absolute;left:25px;top:539px;width:868px;height:1px;background:#d4d4d4;"></div>
<div style="position:absolute;left:25px;top:559px;width:868px;height:1px;background:#d4d4d4;"></div>
<div style="position:absolute;left:25px;top:579px;width:868px;height:1px;background:#d4d4d4;"></div>
<div style="position:absolute;left:0px;top:211px;width:24px;height:1px;background:#ababab;"></div>
<div style="position:absolute;left:-3.0px;width:30px;text-align:center;top:196.64px;font-family:'Liberation Sans', sans-serif;font-size:12px;line-height:1;color:#262626;font-weight:400;white-space:nowrap;">1</div>
<div style="position:absolute;left:0px;top:231px;width:24px;height:1px;background:#ababab;"></div>
<div style="position:absolute;left:-3.0px;width:30px;text-align:center;top:216.64px;font-family:'Liberation Sans', sans-serif;font-size:12px;line-height:1;color:#262626;font-weight:400;white-space:nowrap;">2</div>
<div style="position:absolute;left:0px;top:255px;width:24px;height:1px;background:#ababab;"></div>
<div style="position:absolute;left:-3.0px;width:30px;text-align:center;top:240.64px;font-family:'Liberation Sans', sans-serif;font-size:12px;line-height:1;color:#262626;font-weight:400;white-space:nowrap;">3</div>
<div style="position:absolute;left:0px;top:275px;width:24px;height:1px;background:#ababab;"></div>
<div style="position:absolute;left:-3.0px;width:30px;text-align:center;top:260.64px;font-family:'Liberation Sans', sans-serif;font-size:12px;line-height:1;color:#217346;font-weight:400;white-space:nowrap;">4</div>
<div style="position:absolute;left:0px;top:296px;width:24px;height:1px;background:#ababab;"></div>
<div style="position:absolute;left:-3.0px;width:30px;text-align:center;top:281.64px;font-family:'Liberation Sans', sans-serif;font-size:12px;line-height:1;color:#217346;font-weight:400;white-space:nowrap;">5</div>
<div style="position:absolute;left:0px;top:316px;width:24px;height:1px;background:#ababab;"></div>
<div style="position:absolute;left:-3.0px;width:30px;text-align:center;top:301.64px;font-family:'Liberation Sans', sans-serif;font-size:12px;line-height:1;color:#217346;font-weight:400;white-space:nowrap;">6</div>
<div style="position:absolute;left:0px;top:337px;width:24px;height:1px;background:#ababab;"></div>
<div style="position:absolute;left:-3.0px;width:30px;text-align:center;top:322.64px;font-family:'Liberation Sans', sans-serif;font-size:12px;line-height:1;color:#217346;font-weight:400;white-space:nowrap;">7</div>
<div style="position:absolute;left:0px;top:357px;width:24px;height:1px;background:#ababab;"></div>
<div style="position:absolute;left:-3.0px;width:30px;text-align:center;top:342.64px;font-family:'Liberation Sans', sans-serif;font-size:12px;line-height:1;color:#217346;font-weight:400;white-space:nowrap;">8</div>
<div style="position:absolute;left:0px;top:377px;width:24px;height:1px;background:#ababab;"></div>
<div style="position:absolute;left:-3.0px;width:30px;text-align:center;top:362.64px;font-family:'Liberation Sans', sans-serif;font-size:12px;line-height:1;color:#217346;font-weight:400;white-space:nowrap;">9</div>
<div style="position:absolute;left:0px;top:398px;width:24px;height:1px;background:#ababab;"></div>
<div style="position:absolute;left:-3.0px;width:30px;text-align:center;top:383.64px;font-family:'Liberation Sans', sans-serif;font-size:12px;line-height:1;color:#217346;font-weight:400;white-space:nowrap;">10</div>
<div style="position:absolute;left:0px;top:418px;width:24px;height:1px;background:#ababab;"></div>
<div style="position:absolute;left:-3.0px;width:30px;text-align:center;top:403.64px;font-family:'Liberation Sans', sans-serif;font-size:12px;line-height:1;color:#217346;font-weight:400;white-space:nowrap;">11</div>
<div style="position:absolute;left:0px;top:439px;width:24px;height:1px;background:#ababab;"></div>
<div style="position:absolute;left:-3.0px;width:30px;text-align:center;top:424.64px;font-family:'Liberation Sans', sans-serif;font-size:12px;line-height:1;color:#217346;font-weight:400;white-space:nowrap;">12</div>
<div style="position:absolute;left:0px;top:459px;width:24px;height:1px;background:#ababab;"></div>
<div style="position:absolute;left:-3.0px;width:30px;text-align:center;top:444.64px;font-family:'Liberation Sans', sans-serif;font-size:12px;line-height:1;color:#262626;font-weight:400;white-space:nowrap;">13</div>
<div style="position:absolute;left:0px;top:479px;width:24px;height:1px;background:#ababab;"></div>
<div style="position:absolute;left:-3.0px;width:30px;text-align:center;top:464.64px;font-family:'Liberation Sans', sans-serif;font-size:12px;line-height:1;color:#262626;font-weight:400;white-space:nowrap;">14</div>
<div style="position:absolute;left:0px;top:499px;width:24px;height:1px;background:#ababab;"></div>
<div style="position:absolute;left:-3.0px;width:30px;text-align:center;top:484.64px;font-family:'Liberation Sans', sans-serif;font-size:12px;line-height:1;color:#262626;font-weight:400;white-space:nowrap;">15</div>
<div style="position:absolute;left:0px;top:519px;width:24px;height:1px;background:#ababab;"></div>
<div style="position:absolute;left:-3.0px;width:30px;text-align:center;top:504.64px;font-family:'Liberation Sans', sans-serif;font-size:12px;line-height:1;color:#262626;font-weight:400;white-space:nowrap;">16</div>
<div style="position:absolute;left:0px;top:539px;width:24px;height:1px;background:#ababab;"></div>
<div style="position:absolute;left:-3.0px;width:30px;text-align:center;top:524.64px;font-family:'Liberation Sans', sans-serif;font-size:12px;line-height:1;color:#262626;font-weight:400;white-space:nowrap;">17</div>
<div style="position:absolute;left:0px;top:559px;width:24px;height:1px;background:#ababab;"></div>
<div style="position:absolute;left:-3.0px;width:30px;text-align:center;top:544.64px;font-family:'Liberation Sans', sans-serif;font-size:12px;line-height:1;color:#262626;font-weight:400;white-space:nowrap;">18</div>
<div style="position:absolute;left:0px;top:579px;width:24px;height:1px;background:#ababab;"></div>
<div style="position:absolute;left:-3.0px;width:30px;text-align:center;top:564.64px;font-family:'Liberation Sans', sans-serif;font-size:12px;line-height:1;color:#262626;font-weight:400;white-space:nowrap;">19</div>
<div style="position:absolute;left:24px;top:192px;width:1px;height:378px;background:#ababab;"></div>
<div style="position:absolute;left:23px;top:255px;width:2px;height:185px;background:#217346;"></div>
<div style="position:absolute;left:65px;top:211px;width:165px;height:45px;background:#2f5597;"></div>
<div style="position:absolute;left:72.5px;width:150px;text-align:center;top:214.39px;font-family:'Liberation Serif', serif;font-size:15.3px;line-height:1;color:#fff;font-weight:700;white-space:nowrap;">Năm 2018</div>
<div style="position:absolute;left:45.5px;width:120px;text-align:center;top:237.91px;font-family:'Liberation Serif', serif;font-size:14.67px;line-height:1;color:#fff;font-weight:700;white-space:nowrap;">Sản phẩm</div>
<div style="position:absolute;left:127.5px;width:120px;text-align:center;top:237.91px;font-family:'Liberation Serif', serif;font-size:14.67px;line-height:1;color:#fff;font-weight:700;white-space:nowrap;">Đơn giá</div>
<div style="position:absolute;left:66px;top:256px;width:79px;height:19px;background:#fff;"></div>
<div style="position:absolute;left:68px;top:258.91px;font-family:'Liberation Serif', serif;font-size:14.67px;line-height:1;color:#000;font-weight:400;white-space:nowrap;word-spacing:0.8px;">SP 01</div>
<div style="position:absolute;left:146px;top:256px;width:83px;height:19px;background:#c69ca1;"></div>
<div style="position:absolute;left:142px;width:80px;text-align:right;top:259.14px;font-family:'Liberation Serif', serif;font-size:14.4px;line-height:1;color:#7c0008;font-weight:400;white-space:nowrap;">80.420</div>
<div style="position:absolute;left:66px;top:276px;width:79px;height:20px;background:#fff;"></div>
<div style="position:absolute;left:68px;top:279.91px;font-family:'Liberation Serif', serif;font-size:14.67px;line-height:1;color:#000;font-weight:400;white-space:nowrap;word-spacing:0.8px;">SP 02</div>
<div style="position:absolute;left:146px;top:276px;width:83px;height:20px;background:#c6c6c6;"></div>
<div style="position:absolute;left:142px;width:80px;text-align:right;top:280.14px;font-family:'Liberation Serif', serif;font-size:14.4px;line-height:1;color:#000;font-weight:400;white-space:nowrap;">15.666</div>
<div style="position:absolute;left:66px;top:297px;width:79px;height:19px;background:#fff;"></div>
<div style="position:absolute;left:68px;top:299.91px;font-family:'Liberation Serif', serif;font-size:14.67px;line-height:1;color:#000;font-weight:400;white-space:nowrap;word-spacing:0.8px;">SP 03</div>
<div style="position:absolute;left:146px;top:297px;width:83px;height:19px;background:#c69ca1;"></div>
<div style="position:absolute;left:142px;width:80px;text-align:right;top:300.14px;font-family:'Liberation Serif', serif;font-size:14.4px;line-height:1;color:#7c0008;font-weight:400;white-space:nowrap;">98.533</div>
<div style="position:absolute;left:66px;top:317px;width:79px;height:20px;background:#fff;"></div>
<div style="position:absolute;left:68px;top:320.91px;font-family:'Liberation Serif', serif;font-size:14.67px;line-height:1;color:#000;font-weight:400;white-space:nowrap;word-spacing:0.8px;">SP 04</div>
<div style="position:absolute;left:146px;top:317px;width:83px;height:20px;background:#c69ca1;"></div>
<div style="position:absolute;left:142px;width:80px;text-align:right;top:321.14px;font-family:'Liberation Serif', serif;font-size:14.4px;line-height:1;color:#7c0008;font-weight:400;white-space:nowrap;">45.120</div>
<div style="position:absolute;left:66px;top:338px;width:79px;height:19px;background:#fff;"></div>
<div style="position:absolute;left:68px;top:340.91px;font-family:'Liberation Serif', serif;font-size:14.67px;line-height:1;color:#000;font-weight:400;white-space:nowrap;word-spacing:0.8px;">SP 05</div>
<div style="position:absolute;left:146px;top:338px;width:83px;height:19px;background:#c69ca1;"></div>
<div style="position:absolute;left:142px;width:80px;text-align:right;top:341.14px;font-family:'Liberation Serif', serif;font-size:14.4px;line-height:1;color:#7c0008;font-weight:400;white-space:nowrap;">75.000</div>
<div style="position:absolute;left:66px;top:358px;width:79px;height:19px;background:#fff;"></div>
<div style="position:absolute;left:68px;top:360.91px;font-family:'Liberation Serif', serif;font-size:14.67px;line-height:1;color:#000;font-weight:400;white-space:nowrap;word-spacing:0.8px;">SP 06</div>
<div style="position:absolute;left:146px;top:358px;width:83px;height:19px;background:#c6c6c6;"></div>
<div style="position:absolute;left:142px;width:80px;text-align:right;top:361.14px;font-family:'Liberation Serif', serif;font-size:14.4px;line-height:1;color:#000;font-weight:400;white-space:nowrap;">36.550</div>
<div style="position:absolute;left:66px;top:378px;width:79px;height:20px;background:#fff;"></div>
<div style="position:absolute;left:68px;top:381.91px;font-family:'Liberation Serif', serif;font-size:14.67px;line-height:1;color:#000;font-weight:400;white-space:nowrap;word-spacing:0.8px;">SP 07</div>
<div style="position:absolute;left:146px;top:378px;width:83px;height:20px;background:#c69ca1;"></div>
<div style="position:absolute;left:142px;width:80px;text-align:right;top:382.14px;font-family:'Liberation Serif', serif;font-size:14.4px;line-height:1;color:#7c0008;font-weight:400;white-space:nowrap;">75.420</div>
<div style="position:absolute;left:66px;top:399px;width:79px;height:19px;background:#fff;"></div>
<div style="position:absolute;left:68px;top:401.91px;font-family:'Liberation Serif', serif;font-size:14.67px;line-height:1;color:#000;font-weight:400;white-space:nowrap;word-spacing:0.8px;">SP 08</div>
<div style="position:absolute;left:146px;top:399px;width:83px;height:19px;background:#c69ca1;"></div>
<div style="position:absolute;left:142px;width:80px;text-align:right;top:402.14px;font-family:'Liberation Serif', serif;font-size:14.4px;line-height:1;color:#7c0008;font-weight:400;white-space:nowrap;">63.202</div>
<div style="position:absolute;left:66px;top:419px;width:79px;height:20px;background:#fff;"></div>
<div style="position:absolute;left:68px;top:422.91px;font-family:'Liberation Serif', serif;font-size:14.67px;line-height:1;color:#000;font-weight:400;white-space:nowrap;word-spacing:0.8px;">SP 09</div>
<div style="position:absolute;left:146px;top:419px;width:83px;height:20px;background:#c69ca1;"></div>
<div style="position:absolute;left:142px;width:80px;text-align:right;top:423.14px;font-family:'Liberation Serif', serif;font-size:14.4px;line-height:1;color:#7c0008;font-weight:400;white-space:nowrap;">85.963</div>
<div style="position:absolute;left:65px;top:211px;width:165px;height:1px;background:#000;"></div>
<div style="position:absolute;left:65px;top:231px;width:165px;height:1px;background:#000;"></div>
<div style="position:absolute;left:65px;top:255px;width:165px;height:1px;background:#000;"></div>
<div style="position:absolute;left:65px;top:275px;width:165px;height:1px;background:#000;"></div>
<div style="position:absolute;left:65px;top:296px;width:165px;height:1px;background:#000;"></div>
<div style="position:absolute;left:65px;top:316px;width:165px;height:1px;background:#000;"></div>
<div style="position:absolute;left:65px;top:337px;width:165px;height:1px;background:#000;"></div>
<div style="position:absolute;left:65px;top:357px;width:165px;height:1px;background:#000;"></div>
<div style="position:absolute;left:65px;top:377px;width:165px;height:1px;background:#000;"></div>
<div style="position:absolute;left:65px;top:398px;width:165px;height:1px;background:#000;"></div>
<div style="position:absolute;left:65px;top:418px;width:165px;height:1px;background:#000;"></div>
<div style="position:absolute;left:65px;top:439px;width:165px;height:1px;background:#000;"></div>
<div style="position:absolute;left:65px;top:211px;width:1px;height:229px;background:#000;"></div>
<div style="position:absolute;left:229px;top:211px;width:1px;height:229px;background:#000;"></div>
<div style="position:absolute;left:145px;top:231px;width:1px;height:209px;background:#000;"></div>
<div style="position:absolute;left:146px;top:256px;width:1px;height:183px;background:#fff;"></div>
<div style="position:absolute;left:228px;top:256px;width:1px;height:183px;background:#fff;"></div>
<div style="position:absolute;left:146px;top:256px;width:83px;height:1px;background:#fff;"></div>
<div style="position:absolute;left:146px;top:438px;width:83px;height:1px;background:#fff;"></div>
<div style="position:absolute;left:298px;top:211px;width:176px;height:45px;background:#2f5597;"></div>
<div style="position:absolute;left:311.0px;width:150px;text-align:center;top:214.39px;font-family:'Liberation Serif', serif;font-size:15.3px;line-height:1;color:#fff;font-weight:700;white-space:nowrap;">Năm 2019</div>
<div style="position:absolute;left:279.0px;width:120px;text-align:center;top:237.91px;font-family:'Liberation Serif', serif;font-size:14.67px;line-height:1;color:#fff;font-weight:700;white-space:nowrap;">Sản phẩm</div>
<div style="position:absolute;left:366.5px;width:120px;text-align:center;top:237.91px;font-family:'Liberation Serif', serif;font-size:14.67px;line-height:1;color:#fff;font-weight:700;white-space:nowrap;">Đơn giá</div>
<div style="position:absolute;left:299px;top:256px;width:80px;height:19px;background:#fff;"></div>
<div style="position:absolute;left:301px;top:258.91px;font-family:'Liberation Serif', serif;font-size:14.67px;line-height:1;color:#000;font-weight:400;white-space:nowrap;word-spacing:0.8px;">SP 01</div>
<div style="position:absolute;left:380px;top:256px;width:93px;height:19px;background:#ffc7ce;"></div>
<div style="position:absolute;left:386px;width:80px;text-align:right;top:259.14px;font-family:'Liberation Serif', serif;font-size:14.4px;line-height:1;color:#9c0006;font-weight:400;white-space:nowrap;">80.420</div>
<div style="position:absolute;left:299px;top:276px;width:80px;height:20px;background:#fff;"></div>
<div style="position:absolute;left:301px;top:279.91px;font-family:'Liberation Serif', serif;font-size:14.67px;line-height:1;color:#000;font-weight:400;white-space:nowrap;word-spacing:0.8px;">SP 02</div>
<div style="position:absolute;left:380px;top:276px;width:93px;height:20px;background:#c6c6c6;"></div>
<div style="position:absolute;left:386px;width:80px;text-align:right;top:280.14px;font-family:'Liberation Serif', serif;font-size:14.4px;line-height:1;color:#000;font-weight:400;white-space:nowrap;">12.341</div>
<div style="position:absolute;left:299px;top:297px;width:80px;height:19px;background:#fff;"></div>
<div style="position:absolute;left:301px;top:299.91px;font-family:'Liberation Serif', serif;font-size:14.67px;line-height:1;color:#000;font-weight:400;white-space:nowrap;word-spacing:0.8px;">SP 03</div>
<div style="position:absolute;left:380px;top:297px;width:93px;height:19px;background:#c69ca1;"></div>
<div style="position:absolute;left:386px;width:80px;text-align:right;top:300.14px;font-family:'Liberation Serif', serif;font-size:14.4px;line-height:1;color:#7c0008;font-weight:400;white-space:nowrap;">98.533</div>
<div style="position:absolute;left:299px;top:317px;width:80px;height:20px;background:#fff;"></div>
<div style="position:absolute;left:301px;top:320.91px;font-family:'Liberation Serif', serif;font-size:14.67px;line-height:1;color:#000;font-weight:400;white-space:nowrap;word-spacing:0.8px;">SP 04</div>
<div style="position:absolute;left:380px;top:317px;width:93px;height:20px;background:#c69ca1;"></div>
<div style="position:absolute;left:386px;width:80px;text-align:right;top:321.14px;font-family:'Liberation Serif', serif;font-size:14.4px;line-height:1;color:#7c0008;font-weight:400;white-space:nowrap;">45.120</div>
<div style="position:absolute;left:299px;top:338px;width:80px;height:19px;background:#fff;"></div>
<div style="position:absolute;left:301px;top:340.91px;font-family:'Liberation Serif', serif;font-size:14.67px;line-height:1;color:#000;font-weight:400;white-space:nowrap;word-spacing:0.8px;">SP 05</div>
<div style="position:absolute;left:380px;top:338px;width:93px;height:19px;background:#c69ca1;"></div>
<div style="position:absolute;left:386px;width:80px;text-align:right;top:341.14px;font-family:'Liberation Serif', serif;font-size:14.4px;line-height:1;color:#7c0008;font-weight:400;white-space:nowrap;">75.000</div>
<div style="position:absolute;left:299px;top:358px;width:80px;height:19px;background:#fff;"></div>
<div style="position:absolute;left:301px;top:360.91px;font-family:'Liberation Serif', serif;font-size:14.67px;line-height:1;color:#000;font-weight:400;white-space:nowrap;word-spacing:0.8px;">SP 06</div>
<div style="position:absolute;left:380px;top:358px;width:93px;height:19px;background:#c6c6c6;"></div>
<div style="position:absolute;left:386px;width:80px;text-align:right;top:361.14px;font-family:'Liberation Serif', serif;font-size:14.4px;line-height:1;color:#000;font-weight:400;white-space:nowrap;">54.100</div>
<div style="position:absolute;left:299px;top:378px;width:80px;height:20px;background:#fff;"></div>
<div style="position:absolute;left:301px;top:381.91px;font-family:'Liberation Serif', serif;font-size:14.67px;line-height:1;color:#000;font-weight:400;white-space:nowrap;word-spacing:0.8px;">SP 07</div>
<div style="position:absolute;left:380px;top:378px;width:93px;height:20px;background:#c69ca1;"></div>
<div style="position:absolute;left:386px;width:80px;text-align:right;top:382.14px;font-family:'Liberation Serif', serif;font-size:14.4px;line-height:1;color:#7c0008;font-weight:400;white-space:nowrap;">75.420</div>
<div style="position:absolute;left:299px;top:399px;width:80px;height:19px;background:#fff;"></div>
<div style="position:absolute;left:301px;top:401.91px;font-family:'Liberation Serif', serif;font-size:14.67px;line-height:1;color:#000;font-weight:400;white-space:nowrap;word-spacing:0.8px;">SP 08</div>
<div style="position:absolute;left:380px;top:399px;width:93px;height:19px;background:#c69ca1;"></div>
<div style="position:absolute;left:386px;width:80px;text-align:right;top:402.14px;font-family:'Liberation Serif', serif;font-size:14.4px;line-height:1;color:#7c0008;font-weight:400;white-space:nowrap;">63.202</div>
<div style="position:absolute;left:299px;top:419px;width:80px;height:20px;background:#fff;"></div>
<div style="position:absolute;left:301px;top:422.91px;font-family:'Liberation Serif', serif;font-size:14.67px;line-height:1;color:#000;font-weight:400;white-space:nowrap;word-spacing:0.8px;">SP 09</div>
<div style="position:absolute;left:380px;top:419px;width:93px;height:20px;background:#c69ca1;"></div>
<div style="position:absolute;left:386px;width:80px;text-align:right;top:423.14px;font-family:'Liberation Serif', serif;font-size:14.4px;line-height:1;color:#7c0008;font-weight:400;white-space:nowrap;">85.963</div>
<div style="position:absolute;left:298px;top:211px;width:176px;height:1px;background:#000;"></div>
<div style="position:absolute;left:298px;top:231px;width:176px;height:1px;background:#000;"></div>
<div style="position:absolute;left:298px;top:255px;width:176px;height:1px;background:#000;"></div>
<div style="position:absolute;left:298px;top:275px;width:176px;height:1px;background:#000;"></div>
<div style="position:absolute;left:298px;top:296px;width:176px;height:1px;background:#000;"></div>
<div style="position:absolute;left:298px;top:316px;width:176px;height:1px;background:#000;"></div>
<div style="position:absolute;left:298px;top:337px;width:176px;height:1px;background:#000;"></div>
<div style="position:absolute;left:298px;top:357px;width:176px;height:1px;background:#000;"></div>
<div style="position:absolute;left:298px;top:377px;width:176px;height:1px;background:#000;"></div>
<div style="position:absolute;left:298px;top:398px;width:176px;height:1px;background:#000;"></div>
<div style="position:absolute;left:298px;top:418px;width:176px;height:1px;background:#000;"></div>
<div style="position:absolute;left:298px;top:439px;width:176px;height:1px;background:#000;"></div>
<div style="position:absolute;left:298px;top:211px;width:1px;height:229px;background:#000;"></div>
<div style="position:absolute;left:473px;top:211px;width:1px;height:229px;background:#000;"></div>
<div style="position:absolute;left:379px;top:231px;width:1px;height:209px;background:#000;"></div>
<div style="position:absolute;left:380px;top:256px;width:1px;height:183px;background:#fff;"></div>
<div style="position:absolute;left:472px;top:256px;width:1px;height:183px;background:#fff;"></div>
<div style="position:absolute;left:380px;top:256px;width:93px;height:1px;background:#fff;"></div>
<div style="position:absolute;left:380px;top:438px;width:93px;height:1px;background:#fff;"></div>
<div style="position:absolute;left:381px;top:257px;width:89px;height:15px;border:1px solid #217346"></div>
<div style="position:absolute;left:508px;top:232px;width:368px;height:131px;background:#f0f0f0;border:1px solid #707070;box-shadow:1px 2px 12px rgba(0,0,0,0.3)"></div>
<div style="position:absolute;left:509px;top:233px;width:368px;height:30px;background:#fff;"></div>
<div style="position:absolute;left:517.5px;top:242.48px;font-family:'Liberation Sans', sans-serif;font-size:11.6px;line-height:1;color:#000;font-weight:400;white-space:nowrap;">Duplicate Values</div>
<div style="position:absolute;left:806px;top:241.30px;font-family:'Liberation Sans', sans-serif;font-size:13px;line-height:1;color:#000;font-weight:400;white-space:nowrap;">?</div>
<svg style="position:absolute;left:848px;top:241px;" width="12" height="12" viewBox="0 0 12 12"><path d="M0.5 0.5 L11.5 11.5 M11.5 0.5 L0.5 11.5" stroke="#000" stroke-width="1"/></svg>
<div style="position:absolute;left:516.6px;top:271.99px;font-family:'Liberation Sans', sans-serif;font-size:11px;line-height:1;color:#000;font-weight:700;white-space:nowrap;transform:scaleX(0.985);transform-origin:0 0;">Format cells that contain:</div>
<div style="position:absolute;left:515px;top:298px;width:78px;height:19px;background:#fff;border:1px solid #a8a8a8"></div>
<div style="position:absolute;left:577px;top:300px;width:15px;height:17px;background:#e5e5e5;box-sizing:border-box;border:1px solid #c8c8c8"></div>
<svg style="position:absolute;left:580px;top:306px;" width="9" height="6" viewBox="0 0 9 6"><path d="M0.5 0.5 L4.5 4.5 L8.5 0.5" fill="none" stroke="#555" stroke-width="1"/></svg>
<div style="position:absolute;left:517px;top:301px;width:1px;height:15px;background:#0078d7;"></div>
<div style="position:absolute;left:519.2px;top:302.48px;font-family:'Liberation Sans', sans-serif;font-size:11.6px;line-height:1;color:#000;font-weight:400;white-space:nowrap;">Duplicate</div>
<div style="position:absolute;left:604.8px;top:303.18px;font-family:'Liberation Sans', sans-serif;font-size:11.6px;line-height:1;color:#000;font-weight:400;white-space:nowrap;">values with</div>
<div style="position:absolute;left:673px;top:298px;width:196px;height:19px;background:#fff;border:1px solid #a8a8a8"></div>
<div style="position:absolute;left:676px;top:301px;width:173px;height:13px;background:#99c9ef;border:1px dotted #222"></div>
<div style="position:absolute;left:677px;top:302.77px;font-family:'Liberation Sans', sans-serif;font-size:11.5px;line-height:1;color:#000;font-weight:400;white-space:nowrap;">Light Red Fill with Dark Red Text</div>
<div style="position:absolute;left:853px;top:300px;width:15px;height:17px;background:#e5e5e5;box-sizing:border-box;border:1px solid #c8c8c8"></div>
<svg style="position:absolute;left:856px;top:306px;" width="9" height="6" viewBox="0 0 9 6"><path d="M0.5 0.5 L4.5 4.5 L8.5 0.5" fill="none" stroke="#555" stroke-width="1"/></svg>
<div style="position:absolute;left:713px;top:335px;width:69px;height:17px;background:#e1e1e1;border:2px solid #0078d7"></div>
<div style="position:absolute;left:719.5px;width:60px;text-align:center;top:340.48px;font-family:'Liberation Sans', sans-serif;font-size:11.6px;line-height:1;color:#000;font-weight:400;white-space:nowrap;">OK</div>
<div style="position:absolute;left:797px;top:335px;width:71px;height:19px;background:#e1e1e1;border:1px solid #adadad"></div>
<div style="position:absolute;left:803.5px;width:60px;text-align:center;top:340.48px;font-family:'Liberation Sans', sans-serif;font-size:11.6px;line-height:1;color:#000;font-weight:400;white-space:nowrap;">Cancel</div>
</body></html>
